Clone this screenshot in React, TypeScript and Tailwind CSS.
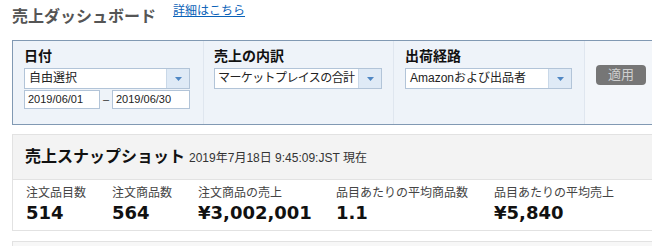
const jp = "font-['Liberation_Sans','Noto_Sans_CJK_JP',sans-serif]";

function Arrow() {
  return (
    <div className="flex h-full w-[23px] shrink-0 items-center justify-center border-l border-[#c9d8e8] bg-[#dfeaf6]">
      <svg width="7" height="4" viewBox="0 0 7 4">
        <path d="M0 0h7L3.5 4z" fill="#4f87c4" />
      </svg>
    </div>
  );
}

function Select({ value, width, tight }: { value: string; width: string; tight?: boolean }) {
  return (
    <div className={`flex h-[21px] items-center border border-[#b2c4d8] bg-white ${width}`}>
      <span
        className={`flex-1 overflow-hidden whitespace-nowrap text-[12px] leading-[19px] text-[#222] ${
          tight ? 'pl-[3px] tracking-[-0.6px]' : 'pl-[4px]'
        }`}
      >
        {value}
      </span>
      <Arrow />
    </div>
  );
}

const metrics = [
  { label: '注文品目数', value: '514', w: 'w-[86px]' },
  { label: '注文商品数', value: '564', w: 'w-[86px]' },
  { label: '注文商品の売上', value: '¥3,002,001', w: 'w-[138px]' },
  { label: '品目あたりの平均商品数', value: '1.1', w: 'w-[158px]' },
  { label: '品目あたりの平均売上', value: '¥5,840', w: 'w-[150px]' },
];

export default function App() {
  return (
    <div className={`h-[246px] w-[652px] overflow-hidden bg-white pl-[12px] ${jp}`}>
      {/* header */}
      <div className="flex h-[40px] items-start">
        <h1 className="pt-[7px] text-[16px] font-bold leading-[20px] text-[#555]">売上ダッシュボード</h1>
        <a href="#" className="ml-[17px] pt-[3px] text-[12px] leading-[16px] text-[#0b62b8] underline">
          詳細はこちら
        </a>
      </div>

      {/* filters */}
      <div className="flex h-[85px] w-[680px] border border-[#8199b3] bg-[#eef3f9]">
        <div className="w-[191px] border-r border-[#dfe6ef] pl-[11px] pt-[6px]">
          <div className="text-[14px] font-bold leading-[18px] text-[#111]">日付</div>
          <div className="mt-[3px]">
            <Select value="自由選択" width="w-[166px]" />
          </div>
          <div className="mt-[1px] flex items-center">
            <div className="flex h-[19px] w-[76px] items-center border border-[#b2c4d8] bg-white pl-[3px] text-[11px] text-[#222]">
              2019/06/01
            </div>
            <span className="w-[12px] text-center text-[11px] text-[#333]">–</span>
            <div className="flex h-[19px] w-[78px] items-center border border-[#b2c4d8] bg-white pl-[3px] text-[11px] text-[#222]">
              2019/06/30
            </div>
          </div>
        </div>
        <div className="w-[190px] border-r border-[#dfe6ef] pl-[10px] pt-[6px]">
          <div className="text-[14px] font-bold leading-[18px] text-[#111]">売上の内訳</div>
          <div className="mt-[3px]">
            <Select value="マーケットプレイスの合計" width="w-[168px]" tight />
          </div>
        </div>
        <div className="w-[191px] border-r border-[#dfe6ef] pl-[11px] pt-[6px]">
          <div className="text-[14px] font-bold leading-[18px] text-[#111]">出荷経路</div>
          <div className="mt-[3px]">
            <Select value="Amazonおよび出品者" width="w-[167px]" />
          </div>
        </div>
        <div className="flex-1 bg-[#f3f6fa] pl-[11px] pt-[21px]">
          <button className="h-[20px] w-[50px] rounded-[4px] bg-[#767676] text-[13px] leading-[20px] text-[#cfcfcf]">
            適用
          </button>
        </div>
      </div>

      {/* snapshot */}
      <div className="mt-[9px] w-[680px] border border-[#e2e2e2]">
        <div className="flex h-[45px] items-center border-b border-[#e2e2e2] bg-[#f3f3f3] pl-[12px]">
          <span className="text-[16px] font-bold leading-[20px] text-[#111]">売上スナップショット</span>
          <span className="ml-[4px] mt-[2px] text-[12px] leading-[16px] text-[#333]">2019年7月18日 9:45:09:JST 現在</span>
        </div>
        <div className="flex h-[50px] bg-white pl-[13px] pt-[5px]">
          {metrics.map((m) => (
            <div key={m.label} className={m.w}>
              <div className="text-[12px] leading-[16px] text-[#444]">{m.label}</div>
              <div className="mt-[1px] font-['DejaVu_Sans',sans-serif] text-[18px] font-bold leading-[22px] text-[#111]">
                {m.value}
              </div>
            </div>
          ))}
        </div>
      </div>

      <div className="mt-[10px] h-[20px] w-[680px] border border-[#e2e2e2] bg-[#f7f7f7]" />
    </div>
  );
}
